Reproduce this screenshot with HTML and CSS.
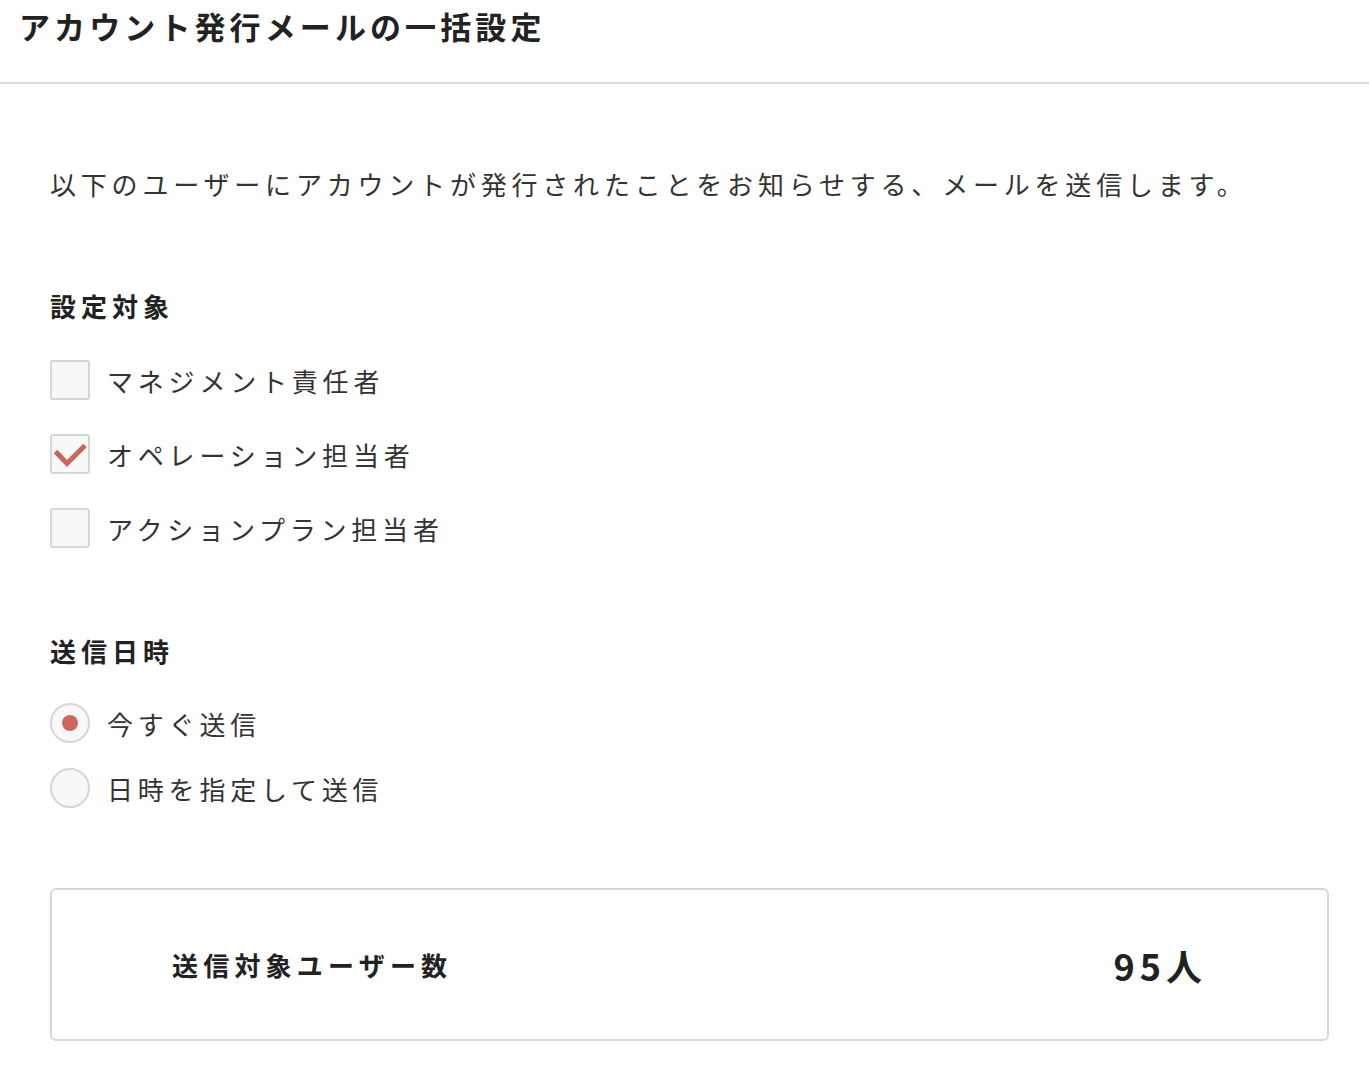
FILE: index.html
```html
<!DOCTYPE html>
<html lang="ja">
<head>
  <meta charset="UTF-8" />
  <meta name="viewport" content="width=device-width, initial-scale=1.0"/>
  <title>アカウント発行メールの一括設定</title>
  <link rel="stylesheet" href="styles.css">
</head>
<body>
  <header class="page-header">
    <h1>アカウント発行メールの一括設定</h1>
  </header>

  <main class="content">
    <p class="lead">以下のユーザーにアカウントが発行されたことをお知らせする、メールを送信します。</p>

    <section class="section">
      <h2>設定対象</h2>
      <div class="choices choices-check">
        <label class="choice">
          <span class="checkbox"></span>
          <span>マネジメント責任者</span>
        </label>
        <label class="choice">
          <span class="checkbox checked">
            <svg viewBox="0 0 40 40" width="40" height="40">
              <path d="M5.5 17.5 L17 29.5 L35 11.5" fill="none" stroke="#c9655a" stroke-width="5" stroke-linecap="butt" stroke-linejoin="miter"/>
            </svg>
          </span>
          <span>オペレーション担当者</span>
        </label>
        <label class="choice">
          <span class="checkbox"></span>
          <span>アクションプラン担当者</span>
        </label>
      </div>
    </section>

    <section class="section section-date">
      <h2>送信日時</h2>
      <div class="choices choices-radio">
        <label class="choice">
          <span class="radio checked"></span>
          <span>今すぐ送信</span>
        </label>
        <label class="choice">
          <span class="radio"></span>
          <span>日時を指定して送信</span>
        </label>
      </div>
    </section>

    <div class="summary">
      <span class="summary-label">送信対象ユーザー数</span>
      <span class="summary-value">95人</span>
    </div>
  </main>
</body>
</html>
```

FILE: styles.css
```css
body {
  margin: 0;
  font-family: "Noto Sans CJK JP", "Noto Sans", sans-serif;
  color: #333;
  background: #fff;
}

.page-header {
  height: 82px;
  border-bottom: 2px solid #dcdcdc;
}

.page-header h1 {
  margin: 0;
  padding-left: 19px;
  font-size: 31px;
  line-height: 52px;
  letter-spacing: 4.1px;
  font-weight: bold;
  color: #222;
}

.content {
  padding: 82px 40px 40px 50px;
}

.lead {
  margin: 0;
  font-size: 26px;
  line-height: 36px;
  letter-spacing: 4.8px;
}

.section {
  margin-top: 86px;
}

.section-date {
  margin-top: 85px;
}

.section h2 {
  margin: 0 0 36px;
  font-size: 26px;
  line-height: 36px;
  letter-spacing: 5px;
  font-weight: bold;
  color: #222;
}

.section-date h2 {
  margin-bottom: 34px;
}

.choices {
  display: flex;
  flex-direction: column;
  gap: 34px;
}

.choices-radio {
  gap: 25px;
}

.choice {
  display: flex;
  align-items: center;
  gap: 17px;
  height: 40px;
  font-size: 26px;
  letter-spacing: 4.8px;
  cursor: pointer;
}

.checkbox {
  width: 40px;
  height: 40px;
  box-sizing: border-box;
  border: 2px solid #d6d6d6;
  border-radius: 3px;
  background: #f8f8f8;
  position: relative;
  flex: none;
}

.checkbox svg {
  position: absolute;
  left: -2px;
  top: -2px;
}

.radio {
  width: 40px;
  height: 40px;
  box-sizing: border-box;
  border: 2px solid #d6d6d6;
  border-radius: 50%;
  background: #f8f8f8;
  display: flex;
  align-items: center;
  justify-content: center;
  flex: none;
}

.radio.checked::after {
  content: "";
  width: 16px;
  height: 16px;
  border-radius: 50%;
  background: #cd675d;
}

.summary {
  margin-top: 80px;
  width: 1279px;
  height: 153px;
  box-sizing: border-box;
  border: 2px solid #d6d6d6;
  border-radius: 6px;
  padding: 0 120px;
  display: flex;
  align-items: center;
  justify-content: space-between;
}

.summary-label {
  font-size: 26px;
  font-weight: bold;
  letter-spacing: 5.2px;
  color: #222;
}

.summary-value {
  font-size: 36px;
  font-weight: bold;
  letter-spacing: 5px;
  color: #222;
}
```
